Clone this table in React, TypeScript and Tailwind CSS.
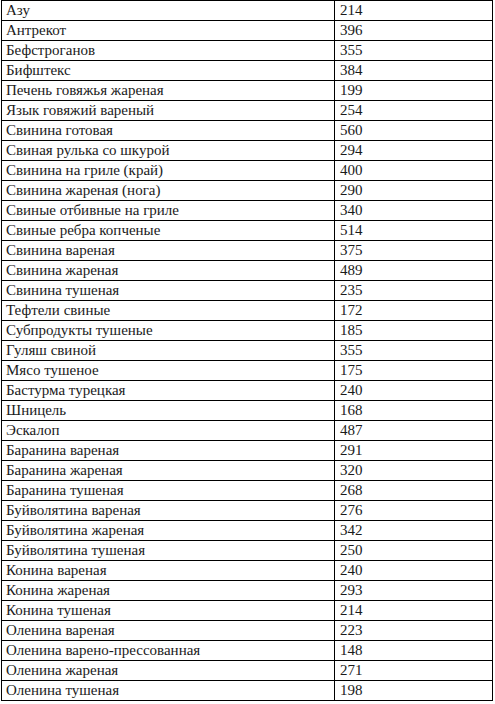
const rows: [string, number][] = [
  ["Азу", 214],
  ["Антрекот", 396],
  ["Бефстроганов", 355],
  ["Бифштекс", 384],
  ["Печень говяжья жареная", 199],
  ["Язык говяжий вареный", 254],
  ["Свинина готовая", 560],
  ["Свиная рулька со шкурой", 294],
  ["Свинина на гриле (край)", 400],
  ["Свинина жареная (нога)", 290],
  ["Свиные отбивные на гриле", 340],
  ["Свиные ребра копченые", 514],
  ["Свинина вареная", 375],
  ["Свинина жареная", 489],
  ["Свинина тушеная", 235],
  ["Тефтели свиные", 172],
  ["Субпродукты тушеные", 185],
  ["Гуляш свиной", 355],
  ["Мясо тушеное", 175],
  ["Бастурма турецкая", 240],
  ["Шницель", 168],
  ["Эскалоп", 487],
  ["Баранина вареная", 291],
  ["Баранина жареная", 320],
  ["Баранина тушеная", 268],
  ["Буйволятина вареная", 276],
  ["Буйволятина жареная", 342],
  ["Буйволятина тушеная", 250],
  ["Конина вареная", 240],
  ["Конина жареная", 293],
  ["Конина тушеная", 214],
  ["Оленина вареная", 223],
  ["Оленина варено-прессованная", 148],
  ["Оленина жареная", 271],
  ["Оленина тушеная", 198],
];

export default function App() {
  return (
    <div className="w-[495px] h-[704px] bg-white pl-px overflow-hidden font-['Liberation_Serif','Times_New_Roman',serif] text-[15px] text-[#1a1a1a]">
      {/* Таблица калорийности */}
      <div className="w-[492px] flex flex-col border-t border-l border-black">
        {rows.map(([name, kcal]) => (
          <div key={name} className="flex h-[20px] border-b border-black leading-[19px]">
            <div className="w-[333px] shrink-0 border-r border-black pl-[4px] whitespace-nowrap">{name}</div>
            <div className="flex-1 border-r border-black pl-[5px]">{kcal}</div>
          </div>
        ))}
      </div>
    </div>
  );
}
